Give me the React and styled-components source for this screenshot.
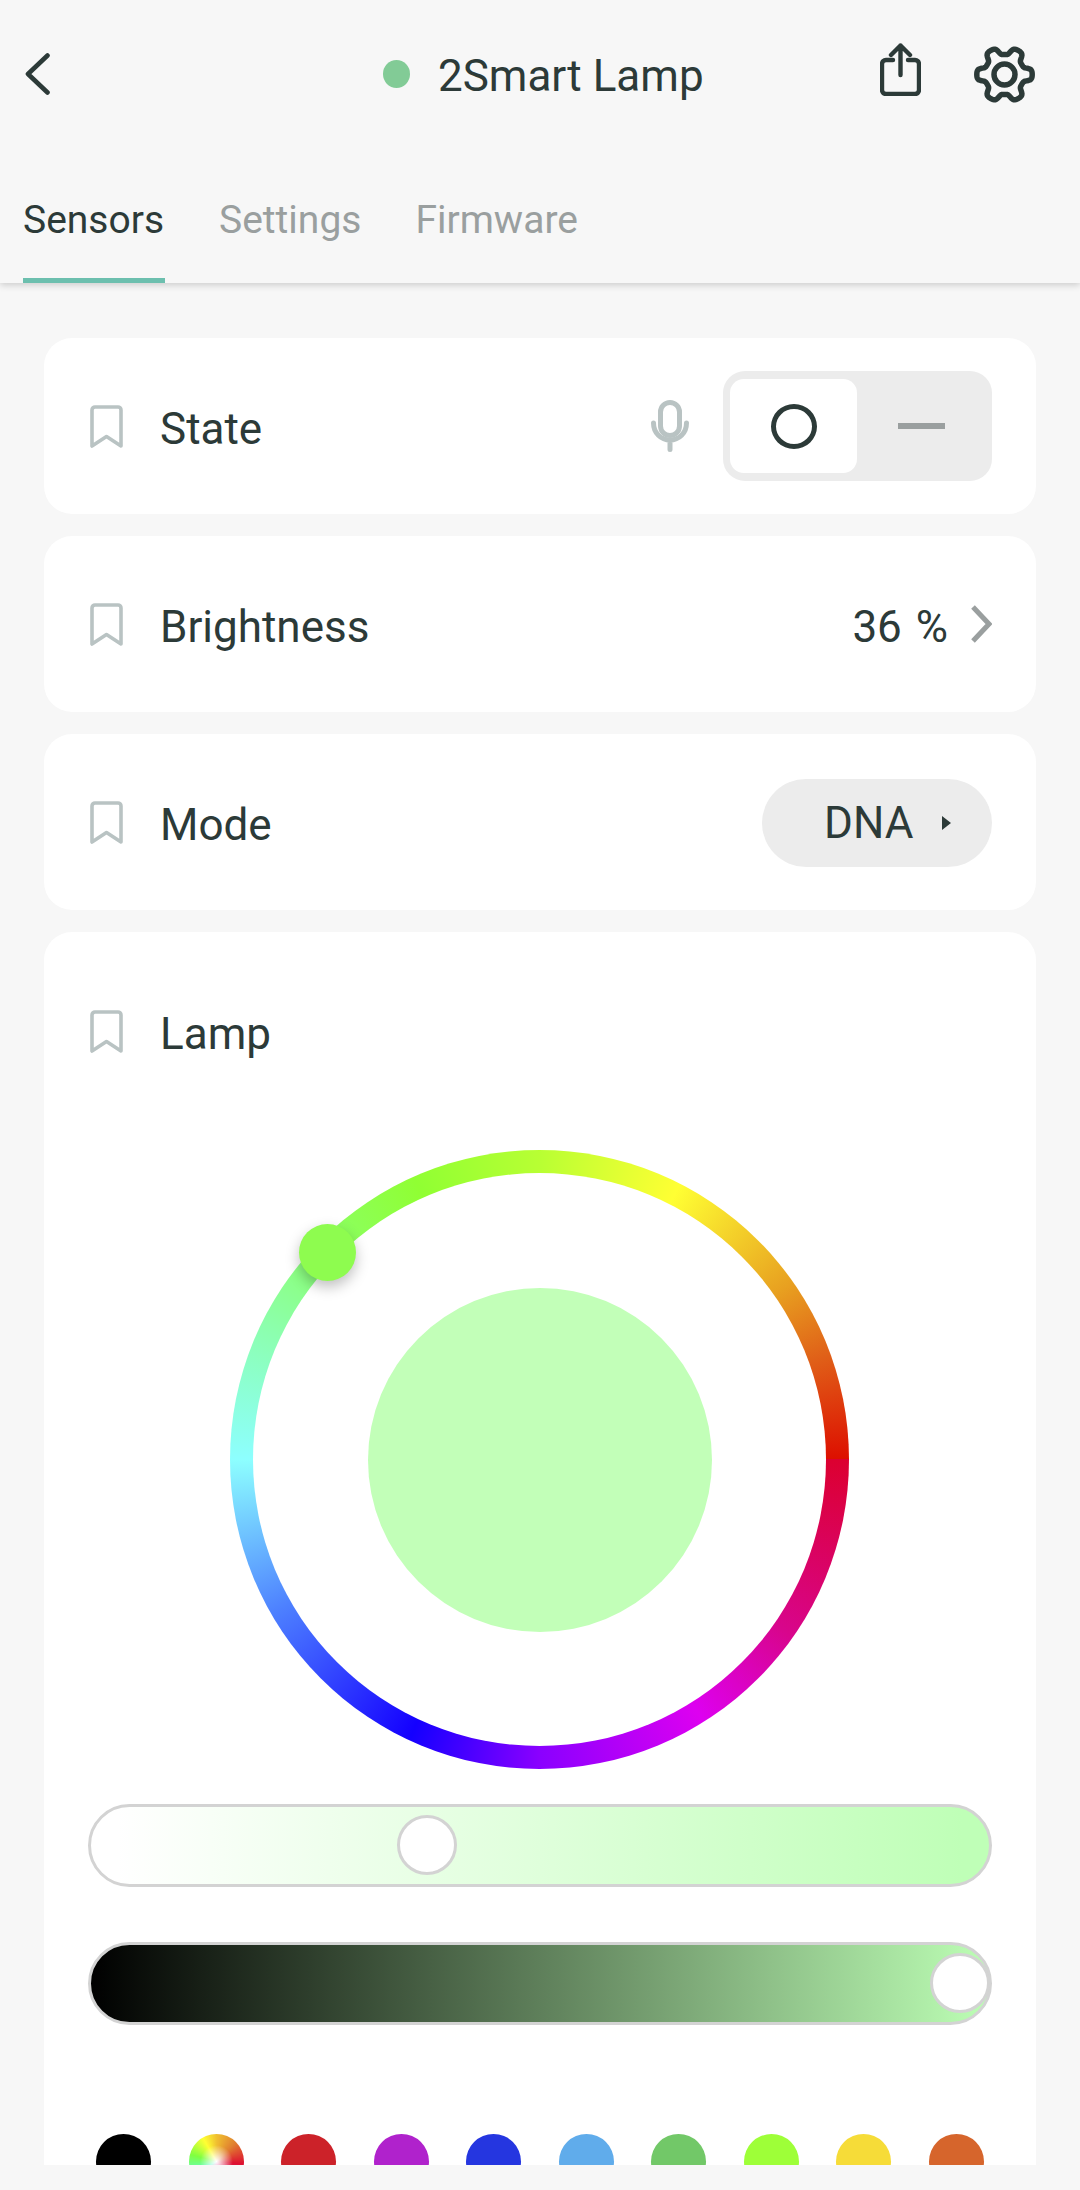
import React from "react";
import styled, { createGlobalStyle } from "styled-components";

const GlobalStyle = createGlobalStyle`
  html, body { margin: 0; padding: 0; background: #f7f7f7; }
  * { box-sizing: border-box; }
`;

const INK = "#2c3a38";
const MUTED = "#9a9f9f";
const SOFT = "#b9c3c3";

const Page = styled.div`
  width: 1080px;
  height: 2190px;
  overflow: hidden;
  display: flex;
  flex-direction: column;
  background: #f7f7f7;
  color: ${INK};
  font-family: Roboto, "Liberation Sans", sans-serif;
`;
const Header = styled.header`
  flex: none;
  height: 283px;
  background: #f7f7f7;
  box-shadow: 0 2px 7px rgba(0, 0, 0, 0.18);
  position: relative;
  z-index: 1;
`;
const TopBar = styled.div`
  height: 148px;
  display: flex;
  align-items: center;
  padding: 0 45px 0 25px;
`;
const Status = styled.div`
  display: flex;
  align-items: center;
  gap: 28px;
  margin-left: 333px;
`;
const Dot = styled.span`
  width: 27px;
  height: 28px;
  border-radius: 50%;
  background: #82cb96;
`;
const Title = styled.h1`
  margin: 0;
  padding-top: 3px;
  font-size: 44px;
  line-height: 48px;
  font-weight: 400;
`;
const Actions = styled.div`
  margin-left: auto;
  display: flex;
  align-items: center;
  gap: 53px;
`;
const ShareIcon = styled.svg`
  margin-bottom: 9px;
`;
const Tabs = styled.nav`
  height: 135px;
  display: flex;
  align-items: flex-end;
  gap: 54px;
  padding-left: 23px;
`;
const Tab = styled.div`
  height: 89px;
  min-width: 142px;
  padding-top: 4px;
  font-size: 39px;
  line-height: 44px;
  color: ${(p) => (p.$active ? INK : MUTED)};
  border-bottom: 5px solid ${(p) => (p.$active ? "#6cbfae" : "transparent")};
`;
const Main = styled.main`
  flex: none;
  height: 1882px;
  overflow: hidden;
  padding: 55px 44px 0;
  display: flex;
  flex-direction: column;
  gap: 22px;
`;
const Card = styled.section`
  flex: none;
  height: 176px;
  background: #fff;
  border-radius: 28px;
  display: flex;
  align-items: center;
  padding: 0 44px 0 46px;
`;
const Label = styled.span`
  margin-left: 37px;
  font-size: 44px;
  line-height: 48px;
  padding-top: 5px;
`;
const Mic = styled.svg`
  margin-left: auto;
  margin-right: 34px;
`;
const Toggle = styled.div`
  width: 269px;
  height: 110px;
  background: #ececec;
  border-radius: 22px;
  padding: 8px 7px;
  display: flex;
`;
const ToggleOn = styled.div`
  width: 127px;
  background: #fff;
  border-radius: 14px;
  display: flex;
  align-items: center;
  justify-content: center;
`;
const Ring = styled.span`
  width: 46px;
  height: 45px;
  border-radius: 50%;
  border: 5px solid ${INK};
`;
const ToggleOff = styled.div`
  flex: 1;
  display: flex;
  align-items: center;
  justify-content: center;
`;
const Dash = styled.span`
  width: 47px;
  height: 6px;
  background: ${MUTED};
`;
const Value = styled.span`
  margin-left: auto;
  margin-right: 22px;
  font-size: 44px;
  line-height: 48px;
  padding-top: 5px;
  word-spacing: 3px;
`;
const Pill = styled.div`
  margin-left: auto;
  margin-top: 2px;
  width: 230px;
  height: 88px;
  border-radius: 44px;
  background: #ececec;
  display: flex;
  align-items: center;
  gap: 29px;
  padding-left: 62px;
  font-size: 44px;
`;
const Caret = styled.span`
  width: 0;
  height: 0;
  border-left: 9px solid ${INK};
  border-top: 7px solid transparent;
  border-bottom: 7px solid transparent;
`;
const LampCard = styled.section`
  flex: none;
  background: #fff;
  border-radius: 28px;
  padding: 78px 44px 40px;
  display: flex;
  flex-direction: column;
`;
const LampHead = styled.div`
  display: flex;
  align-items: center;
  padding-left: 2px;
  height: 43px;
`;
const Wheel = styled.div`
  position: relative;
  align-self: center;
  width: 619px;
  height: 619px;
  margin: 97px 2px 0 0;
  border-radius: 50%;
  display: flex;
  align-items: center;
  justify-content: center;
  background: conic-gradient(
    from 90deg,
    #dc0030 0deg,
    #d8058c 35deg,
    #dd00f0 58deg,
    #8a00ff 90deg,
    #1400ff 115deg,
    #4d80ff 150deg,
    #8dffff 180deg,
    #8cffb0 205deg,
    #8cff60 228deg,
    #90ff33 246deg,
    #b8ff33 270deg,
    #ffff33 297deg,
    #e8a020 325deg,
    #e06018 340deg,
    #dd0f00 360deg
  );
`;
const WheelHole = styled.div`
  width: 573px;
  height: 573px;
  border-radius: 50%;
  background: #fff;
  display: flex;
  align-items: center;
  justify-content: center;
`;
const Preview = styled.div`
  width: 344px;
  height: 344px;
  border-radius: 50%;
  margin-left: 2px;
  background: #c2ffb8;
`;
const Handle = styled.div`
  position: absolute;
  left: 69px;
  top: 74px;
  width: 57px;
  height: 57px;
  border-radius: 50%;
  background: #8efc4f;
  box-shadow: 0 6px 14px rgba(0, 0, 0, 0.25);
`;
const Slider = styled.div`
  position: relative;
  height: 83px;
  margin-top: ${(p) => p.$gap}px;
  border: 3px solid #d3d3d3;
  border-radius: 42px;
  background: ${(p) => p.$bg};
`;
const Thumb = styled.div`
  position: absolute;
  top: 8px;
  left: ${(p) => p.$left}px;
  width: 60px;
  height: 60px;
  border-radius: 50%;
  background: #fff;
  border: 3px solid #d3d3d3;
`;
const Swatches = styled.div`
  margin-top: 109px;
  padding: 0 8px;
  display: flex;
  justify-content: space-between;
`;
const Swatch = styled.span`
  width: 55px;
  height: 55px;
  border-radius: 50%;
  background: ${(p) => p.$color};
`;

const Bookmark = () => (
  <svg width="33" height="43" viewBox="0 0 33 43" fill="none" stroke={SOFT} strokeWidth="3.6" strokeLinejoin="round">
    <path d="M2 41V5a3 3 0 0 1 3-3h23a3 3 0 0 1 3 3v36L16.5 31.5Z" />
  </svg>
);

const gearPath = (() => {
  const pts = [];
  const n = 180;
  for (let i = 0; i < n; i++) {
    const t = (i / n) * Math.PI * 2;
    const wave = -Math.cos(6 * t);
    const soft = Math.tanh(wave * 2) / Math.tanh(2);
    const r = 23.8 + 3.9 * soft;
    pts.push(`${(30.5 + r * Math.sin(t)).toFixed(2)} ${(29.5 - r * Math.cos(t)).toFixed(2)}`);
  }
  return `M${pts.join("L")}Z`;
})();

const swatches = [
  "#000",
  "radial-gradient(circle at 50% 50%, #fff 0, rgba(255,255,255,0) 42%), conic-gradient(#f0c030 0deg, #e08030 45deg, #dd1030 95deg, #e040a0 180deg, #60ffd0 240deg, #80ff40 285deg, #ffff33 330deg, #f0c030 360deg)",
  "#cc2229",
  "#b022cc",
  "#2536e0",
  "#60aceb",
  "#72c868",
  "#9eff38",
  "#f6dc38",
  "#d6652c",
];

export default function App() {
  return (
    <Page>
      <GlobalStyle />
      <Header>
        <TopBar>
          <svg width="25" height="42" viewBox="0 0 25 42" fill="none" stroke={INK} strokeWidth="4.6" strokeLinecap="round" strokeLinejoin="round">
            <path d="M22.5 2.5L3 21l19.5 18.5" />
          </svg>
          <Status>
            <Dot />
            <Title>2Smart Lamp</Title>
          </Status>
          <Actions>
            <ShareIcon width="41" height="53" viewBox="0 0 41 53" fill="none" stroke={INK} strokeWidth="4.4" strokeLinecap="round" strokeLinejoin="round">
              <path d="M13 17H6a4 4 0 0 0-4 4v26a4 4 0 0 0 4 4h29a4 4 0 0 0 4-4V21a4 4 0 0 0-4-4h-7" />
              <path d="M20.5 32V2.5M11 12l9.5-9.5L30 12" />
            </ShareIcon>
            <svg width="61" height="59" viewBox="0 0 61 59" fill="none" stroke={INK} strokeWidth="5.5" strokeLinejoin="round">
              <path d={gearPath} />
              <circle cx="30.5" cy="29.5" r="10.5" />
            </svg>
          </Actions>
        </TopBar>
        <Tabs>
          <Tab $active>Sensors</Tab>
          <Tab>Settings</Tab>
          <Tab>Firmware</Tab>
        </Tabs>
      </Header>
      <Main>
        <Card>
          <Bookmark />
          <Label>State</Label>
          <Mic width="38" height="52" viewBox="0 0 38 52" fill="none" stroke={SOFT} strokeWidth="5" strokeLinecap="round">
            <rect x="9.5" y="2.5" width="19" height="33" rx="9.5" />
            <path d="M2.5 23c0 10 7.5 17 16.5 17s16.5-7 16.5-17M19 40v9.5" />
          </Mic>
          <Toggle>
            <ToggleOn><Ring /></ToggleOn>
            <ToggleOff><Dash /></ToggleOff>
          </Toggle>
        </Card>
        <Card>
          <Bookmark />
          <Label>Brightness</Label>
          <Value>36 %</Value>
          <svg width="22" height="38" viewBox="0 0 22 38" fill="none" stroke={MUTED} strokeWidth="5">
            <path d="M3 2l16 17L3 36" />
          </svg>
        </Card>
        <Card>
          <Bookmark />
          <Label>Mode</Label>
          <Pill>
            DNA
            <Caret />
          </Pill>
        </Card>
        <LampCard>
          <LampHead>
            <Bookmark />
            <Label>Lamp</Label>
          </LampHead>
          <Wheel>
            <WheelHole>
              <Preview />
            </WheelHole>
            <Handle />
          </Wheel>
          <Slider $gap={35} $bg="linear-gradient(90deg, #ffffff 3%, #bfffb7 97%)">
            <Thumb $left={306} />
          </Slider>
          <Slider $gap={55} $bg="linear-gradient(90deg, #000000 0%, #bdffb5 100%)">
            <Thumb $left={839} />
          </Slider>
          <Swatches>
            {swatches.map((c, i) => (
              <Swatch key={i} $color={c} />
            ))}
          </Swatches>
        </LampCard>
      </Main>
    </Page>
  );
}
